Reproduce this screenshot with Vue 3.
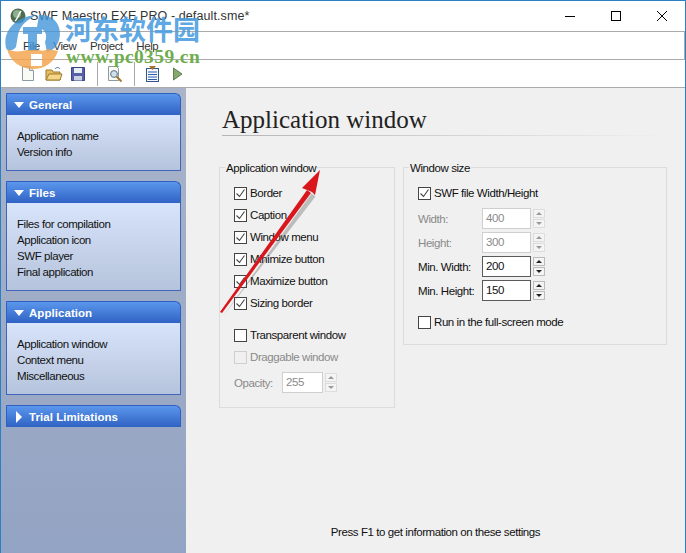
<script setup>
const sections = [
  { title: 'General', open: true, items: ['Application name', 'Version info'] },
  { title: 'Files', open: true, items: ['Files for compilation', 'Application icon', 'SWF player', 'Final application'] },
  { title: 'Application', open: true, items: ['Application window', 'Context menu', 'Miscellaneous'] },
  { title: 'Trial Limitations', open: false, items: [] }
]
const menus = ['File', 'View', 'Project', 'Help']
const winChecks = [
  { label: 'Border', on: true }, { label: 'Caption', on: true }, { label: 'Window menu', on: true },
  { label: 'Minimize button', on: true }, { label: 'Maximize button', on: true }, { label: 'Sizing border', on: true }
]
const sizes = [
  { label: 'Width:', value: '400', off: true }, { label: 'Height:', value: '300', off: true },
  { label: 'Min. Width:', value: '200', off: false }, { label: 'Min. Height:', value: '150', off: false }
]
</script>

<template>
  <div class="win">
    <header class="title">
      <svg class="appicon" width="16" height="16" viewBox="0 0 16 16"><circle cx="8" cy="8" r="7.5" fill="#4d6b4f"/><circle cx="7" cy="6" r="4" fill="#8fb08f"/><path d="M5 13c3-2 3-6 6-10" stroke="#fff" stroke-width="1.4" fill="none"/></svg>
      <span class="title-text">SWF Maestro EXE PRO - default.sme*</span>
      <span class="spacer"></span>
      <span class="capbtn"><svg width="12" height="12" viewBox="0 0 12 12"><path d="M1 6.5h10" stroke="#000"/></svg></span>
      <span class="capbtn"><svg width="12" height="12" viewBox="0 0 12 12"><rect x="1.5" y="1.5" width="9" height="9" fill="none" stroke="#000"/></svg></span>
      <span class="capbtn"><svg width="12" height="12" viewBox="0 0 12 12"><path d="M1 1l10 10M11 1L1 11" stroke="#000" fill="none"/></svg></span>
    </header>

    <nav class="menubar"><span v-for="m in menus" :key="m" class="menu">{{ m }}</span></nav>

    <div class="toolbar">
      <svg width="12" height="15" viewBox="0 0 12 15" class="tool"><path d="M.5.5h7l4 4v10H.5z" fill="#fbfbf6" stroke="#8d9aa5"/><path d="M7.5.5v4h4" fill="#dfe6ea" stroke="#8d9aa5"/></svg>
      <svg width="18" height="16" viewBox="0 0 18 16" class="tool t2"><path d="M1 4h6l1 2h7v8H1z" fill="#e6bc62" stroke="#a07a2c"/><path d="M1 14l3-6h13l-2 6z" fill="#f4d688" stroke="#a07a2c"/><path d="M10 3c1-2 4-2 5 0" stroke="#4c6f96" fill="none"/></svg>
      <svg width="14" height="14" viewBox="0 0 14 14" class="tool t3"><path d="M.5.5h13v13H.5z" fill="#5560a8" stroke="#3a4384"/><rect x="3" y="1" width="8" height="5" fill="#e9edf5"/><rect x="3" y="9" width="8" height="4.5" fill="#c9cfe0"/></svg>
      <span class="sep s1"></span>
      <svg width="15" height="16" viewBox="0 0 15 16" class="tool t4"><path d="M.5.5h8l2 2v12H.5z" fill="#fbfbf6" stroke="#8d9aa5"/><circle cx="6" cy="8" r="3.4" fill="#cfe0ee" stroke="#5f6f7f"/><path d="M8.5 10.5l5 5" stroke="#a07a2c" stroke-width="2"/></svg>
      <span class="sep s2"></span>
      <svg width="13" height="16" viewBox="0 0 13 16" class="tool t5"><rect x=".5" y="2.5" width="12" height="13" fill="#f3f6fb" stroke="#33558a"/><path d="M2 6h9M2 8.5h9M2 11h9M2 13.5h9" stroke="#2d5fa8" stroke-width="1.2"/><path d="M3 0h7L6.500 4z" fill="#a9702a"/></svg>
      <svg width="10" height="14" viewBox="0 0 10 14" class="tool t6"><path d="M.5 1l8.500 6-8.500 6z" fill="#86a86c" stroke="#5f7f58"/></svg>
    </div>

    <div class="body">
      <aside class="side">
        <section v-for="s in sections" :key="s.title" class="panel">
          <h3 class="phead">
            <span :class="s.open ? 'tri-down' : 'tri-right'"></span>{{ s.title }}
          </h3>
          <ul v-if="s.open" class="plist"><li v-for="i in s.items" :key="i">{{ i }}</li></ul>
        </section>
      </aside>

      <main class="main">
        <h1 class="heading">Application window</h1>
        <div class="rule"></div>
        <div class="groups">
          <fieldset class="group g1">
            <legend>Application window</legend>
            <div v-for="c in winChecks" :key="c.label" class="check">
              <span class="box"><svg v-if="c.on" width="11" height="11" viewBox="0 0 11 11"><path d="M1.500 5.500l3 3 5-7" fill="none" stroke="#444" stroke-width="1.1"/></svg></span>{{ c.label }}
            </div>
            <div class="check mt10"><span class="box"></span>Transparent window</div>
            <div class="check off"><span class="box"></span>Draggable window</div>
            <div class="field off op">
              <label class="oplabel">Opacity:</label>
              <span class="input opinput">255</span>
              <span class="spin"><i class="up"></i><i class="down"></i></span>
            </div>
          </fieldset>

          <fieldset class="group g2">
            <legend>Window size</legend>
            <div class="check"><span class="box"><svg width="11" height="11" viewBox="0 0 11 11"><path d="M1.500 5.500l3 3 5-7" fill="none" stroke="#444" stroke-width="1.1"/></svg></span>SWF file Width/Height</div>
            <div class="sizes">
              <div v-for="f in sizes" :key="f.label" class="field" :class="{ off: f.off }">
                <label>{{ f.label }}</label>
                <span class="input">{{ f.value }}</span>
                <span class="spin"><i class="up"></i><i class="down"></i></span>
              </div>
            </div>
            <div class="check runfs"><span class="box"></span>Run in the full-screen mode</div>
          </fieldset>
        </div>
        <p class="hint">Press F1 to get information on these settings</p>
      </main>
    </div>

    <!-- Watermark and annotation lying over the screenshot -->
    <svg class="logo" width="66" height="64" viewBox="0 0 66 64">
      <g fill="#3f94d8" opacity=".78">
        <path d="M5 36C1 18 16 4 36 3 27 7 19 13 17 23l-2 12c-3 4-8 5-10 1z"/>
        <path d="M38 3c15-1 24 11 20 25-2 7-6 10-12 12l-2-10c3-8 0-13-8-15z"/>
        <path d="M22 15h19v7h-5v17h-9V22h-5z"/>
      </g>
      <path fill-rule="evenodd" d="M6 37c5 3 14 3 20 1h12c3 1 6 1 9-1l10 2C53 51 43 57 32 57 19 57 9 49 6 37zM30 42v12h11V42z" fill="#f3a24a" opacity=".82"/>
    </svg>
    <div class="wm-cn">河东软件园</div>
    <div class="wm-url">www.pc0359.cn</div>
    <svg class="arrow" width="112" height="152" viewBox="0 0 112 152">
      <path d="M4 148L92 26l4 3z" fill="#444" opacity=".3" transform="translate(1.500 1.500)"/>
      <path d="M2 146L89 24l4 3L4 147z" fill="#d9161c"/>
      <path d="M102 4L84 22l10 4 3 3z" fill="#d9161c"/>
    </svg>
  </div>
</template>

<style>
html, body { margin: 0; padding: 0; background: #f0f0f0; }
</style>

<style scoped>
.win { position: relative; width: 686px; height: 553px; overflow: hidden; display: flex; flex-direction: column; box-sizing: border-box; border: 1px solid #2b7fc4; border-bottom: 0; font-family: "Liberation Sans", Arial, sans-serif; font-size: 11.5px; letter-spacing: -.42px; color: #111; background: #f0f0f0; }
.title { height: 30px; background: #fff; display: flex; align-items: center; padding-left: 9px; flex: none; }
.appicon { margin-right: 4px; }
.title-text { font-size: 12.5px; letter-spacing: .1px; color: #333; }
.spacer { flex: 1; }
.capbtn { width: 46px; height: 30px; display: flex; align-items: center; justify-content: center; }
.menubar { height: 27px; background: #fff; border: 1px solid #ababab; border-left: 0; display: flex; align-items: center; padding-left: 22px; gap: 13.5px; flex: none; color: #333; }
.toolbar { height: 27px; background: #fff; border-bottom: 1px solid #ababab; display: flex; align-items: center; padding-left: 21px; flex: none; }
.tool { flex: none; }
.t2 { margin-left: 11px; } .t3 { margin-left: 8px; } .t4 { margin-left: 10px; } .t5 { margin-left: 11px; } .t6 { margin-left: 14px; }
.sep { width: 1px; height: 24px; background: #a8a8a8; margin-left: 12px; }
.s2 { margin-left: 11px; }
.body { flex: 1; display: flex; min-height: 0; }
.side { width: 185px; flex: none; background: linear-gradient(180deg, #a9b4c9, #93a3c3); padding: 5px 5px 0; box-sizing: border-box; display: flex; flex-direction: column; gap: 10px; }
.panel { width: 175px; }
.phead { margin: 0; height: 22px; box-sizing: border-box; display: flex; align-items: center; padding-left: 7px; border-radius: 1px 6px 0 0; border: 1px solid #2f5fc0; border-bottom: 0; background: linear-gradient(180deg, #5b97ec, #2f62c4); color: #fff; font-size: 11.5px; font-weight: 700; letter-spacing: .05px; }
.tri-down { width: 0; height: 0; border-left: 5px solid transparent; border-right: 5px solid transparent; border-top: 6px solid #fff; margin-right: 5px; }
.tri-right { width: 0; height: 0; border-top: 6px solid transparent; border-bottom: 6px solid transparent; border-left: 6px solid #fff; margin: 0 7px 0 2px; }
.plist { margin: 0; padding: 13px 0 10px 10px; list-style: none; background: linear-gradient(180deg, #d8e4fa, #b5c3dc); border: 1px solid #3f66b8; border-top: 0; line-height: 16px; }
.main { flex: 1; position: relative; padding: 17px 18px 0 33px; display: flex; flex-direction: column; min-width: 0; }
.heading { margin: 0 0 0 3px; font: 400 25px/30px "Liberation Serif", "Times New Roman", serif; letter-spacing: 0; color: #222; }
.rule { height: 1px; margin: 0 0 0 3px; background: linear-gradient(90deg, #b5b5b5, #f0f0f0); }
.groups { display: flex; align-items: flex-start; gap: 8px; margin-top: 25px; }
.group { margin: 0; padding: 0 0 0 14px; border: 1px solid #dcdcdc; border-radius: 0; box-sizing: border-box; }
.group legend { padding: 0 1px; margin-left: -9px; line-height: 13px; position: relative; top: 1px; }
.g1 { width: 176px; height: 247px; }
.g2 { width: 264px; height: 184px; }
.check { height: 22px; display: flex; align-items: center; }
.g1 > .check:first-of-type, .g2 > .check:first-of-type { margin-top: 8px; }
.box { width: 11px; height: 11px; border: 1px solid #444; background: #fff; margin-right: 3px; display: flex; flex: none; }
.mt10 { margin-top: 10px; }
.check.off, .field.off { color: #8a8a8a; }
.check.off .box { border-color: #cfcfcf; background: #f0f0f0; }
.sizes { display: flex; flex-direction: column; gap: 3px; margin-top: 4px; }
.field { display: flex; align-items: center; height: 21px; }
.field label { width: 64px; }
.input { width: 44px; height: 19px; border: 1px solid #5a5a5a; background: #fff; line-height: 19px; padding-left: 3px; }
.opinput { width: 36px; }
.off .input { border-color: #cfcfcf; }
.spin { margin-left: 2px; width: 12px; display: flex; flex-direction: column; gap: 1px; }
.spin i { display: block; border: 1px solid #bbb; background: #f4f4f4; position: relative; box-sizing: border-box; height: 9px; }
.spin i::after { content: ""; position: absolute; left: 2px; top: 2px; width: 0; height: 0; border-left: 3px solid transparent; border-right: 3px solid transparent; }
.spin .up::after { border-bottom: 3px solid #222; }
.spin .down::after { border-top: 3px solid #222; }
.off .spin i { border-color: #ddd; }
.off .spin .up::after { border-bottom-color: #999; }
.off .spin .down::after { border-top-color: #999; }
.op { margin-top: 4px; }
.oplabel { width: 48px !important; }
.runfs { margin-top: 10px; }
.hint { position: absolute; left: 0; right: 0; bottom: 15px; margin: 0; text-align: center; }
.logo { position: absolute; left: 0; top: 11px; }
.wm-cn { position: absolute; left: 64px; top: 11px; font: 700 27px/34px "Noto Sans CJK SC", sans-serif; letter-spacing: 0; color: #4f9fe0; opacity: .9; }
.wm-url { position: absolute; left: 65px; top: 46px; font: 700 19.5px/20px "Liberation Serif", serif; letter-spacing: .4px; color: #6fae4e; }
.arrow { position: absolute; left: 217px; top: 165px; }
</style>
